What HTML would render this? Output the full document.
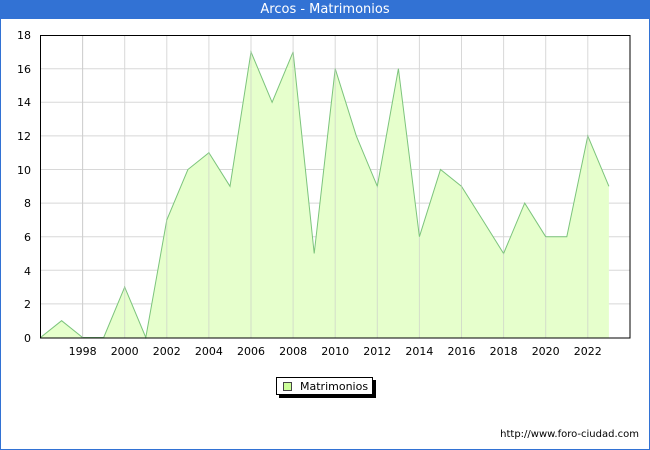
<!DOCTYPE html>
<html><head><style>
html,body{margin:0;padding:0;background:#fff;}
body{width:650px;height:450px;position:relative;overflow:hidden;font-family:"DejaVu Sans","Liberation Sans",sans-serif;}
.frame{position:absolute;left:0;top:0;width:648px;height:448px;border:1px solid #3272d4;}
.title{position:absolute;left:0;top:0;width:650px;height:19px;background:#3272d4;color:#fff;font-size:13px;text-align:center;line-height:20px;}
</style></head><body>
<div class="frame"></div>
<div class="title">Arcos - Matrimonios</div>
<svg width="650" height="450" style="position:absolute;left:0;top:0" font-family="DejaVu Sans, Liberation Sans, sans-serif" font-size="11">
<g stroke="#d8d8d8" stroke-width="1">
<line x1="40" x2="630" y1="303.9" y2="303.9"/><line x1="40" x2="630" y1="270.3" y2="270.3"/>
<line x1="40" x2="630" y1="236.7" y2="236.7"/><line x1="40" x2="630" y1="203.1" y2="203.1"/>
<line x1="40" x2="630" y1="169.5" y2="169.5"/><line x1="40" x2="630" y1="135.9" y2="135.9"/>
<line x1="40" x2="630" y1="102.3" y2="102.3"/><line x1="40" x2="630" y1="68.7" y2="68.7"/>
<line x1="82.6" x2="82.6" y1="35" y2="338"/><line x1="124.7" x2="124.7" y1="35" y2="338"/>
<line x1="166.8" x2="166.8" y1="35" y2="338"/><line x1="208.9" x2="208.9" y1="35" y2="338"/>
<line x1="251" x2="251" y1="35" y2="338"/><line x1="293.1" x2="293.1" y1="35" y2="338"/>
<line x1="335.2" x2="335.2" y1="35" y2="338"/><line x1="377.3" x2="377.3" y1="35" y2="338"/>
<line x1="419.4" x2="419.4" y1="35" y2="338"/><line x1="461.5" x2="461.5" y1="35" y2="338"/>
<line x1="503.6" x2="503.6" y1="35" y2="338"/><line x1="545.7" x2="545.7" y1="35" y2="338"/>
<line x1="587.8" x2="587.8" y1="35" y2="338"/>
</g>
<polygon fill="#e6ffcc" stroke="none" points="40.5,337.5 61.6,320.7 82.6,337.5 103.7,337.5 124.7,287.1 145.8,337.5 166.8,219.9 187.9,169.5 208.9,152.7 230,186.3 251,51.9 272.1,102.3 293.1,51.9 314.2,253.5 335.2,68.7 356.3,135.9 377.3,186.3 398.4,68.7 419.4,236.7 440.5,169.5 461.5,186.3 482.6,219.9 503.6,253.5 524.7,203.1 545.7,236.7 566.8,236.7 587.8,135.9 608.9,186.3 608.9,337.5"/>
<polyline fill="none" stroke="#7cc47c" stroke-width="1" points="40.5,337.5 61.6,320.7 82.6,337.5 103.7,337.5 124.7,287.1 145.8,337.5 166.8,219.9 187.9,169.5 208.9,152.7 230,186.3 251,51.9 272.1,102.3 293.1,51.9 314.2,253.5 335.2,68.7 356.3,135.9 377.3,186.3 398.4,68.7 419.4,236.7 440.5,169.5 461.5,186.3 482.6,219.9 503.6,253.5 524.7,203.1 545.7,236.7 566.8,236.7 587.8,135.9 608.9,186.3"/>
<g stroke="#c8c8c8" stroke-width="1" opacity="0.6">
<line x1="82.6" x2="82.6" y1="35" y2="338"/><line x1="124.7" x2="124.7" y1="287" y2="338"/>
<line x1="166.8" x2="166.8" y1="220" y2="338"/><line x1="208.9" x2="208.9" y1="153" y2="338"/>
<line x1="251" x2="251" y1="52" y2="338"/><line x1="293.1" x2="293.1" y1="52" y2="338"/>
<line x1="335.2" x2="335.2" y1="69" y2="338"/><line x1="377.3" x2="377.3" y1="186" y2="338"/>
<line x1="419.4" x2="419.4" y1="237" y2="338"/><line x1="461.5" x2="461.5" y1="186" y2="338"/>
<line x1="503.6" x2="503.6" y1="253" y2="338"/><line x1="545.7" x2="545.7" y1="237" y2="338"/>
<line x1="587.8" x2="587.8" y1="136" y2="338"/>
</g>
<rect x="40.5" y="35.5" width="589.5" height="302.5" fill="none" stroke="#000" stroke-width="1"/>
<g fill="#000" text-anchor="end">
<text x="31" y="342">0</text><text x="31" y="308">2</text><text x="31" y="275">4</text>
<text x="31" y="241">6</text><text x="31" y="207">8</text><text x="31" y="174">10</text>
<text x="31" y="140">12</text><text x="31" y="106">14</text><text x="31" y="73">16</text>
<text x="31" y="39">18</text>
</g>
<g fill="#000" text-anchor="middle">
<text x="82.6" y="355">1998</text><text x="124.7" y="355">2000</text><text x="166.8" y="355">2002</text>
<text x="208.9" y="355">2004</text><text x="251" y="355">2006</text><text x="293.1" y="355">2008</text>
<text x="335.2" y="355">2010</text><text x="377.3" y="355">2012</text><text x="419.4" y="355">2014</text>
<text x="461.5" y="355">2016</text><text x="503.6" y="355">2018</text><text x="545.7" y="355">2020</text>
<text x="587.8" y="355">2022</text>
</g>
<rect x="279" y="380" width="97" height="18" fill="#000"/>
<rect x="276.5" y="377.5" width="96" height="17" fill="#fff" stroke="#000" stroke-width="1"/>
<rect x="283.5" y="382.5" width="8" height="8" fill="#ccff99" stroke="#444" stroke-width="1"/>
<text x="300" y="390" fill="#000">Matrimonios</text>
<text x="639" y="437" fill="#000" font-size="10" text-anchor="end">http://www.foro-ciudad.com</text>
</svg>
</body></html>
